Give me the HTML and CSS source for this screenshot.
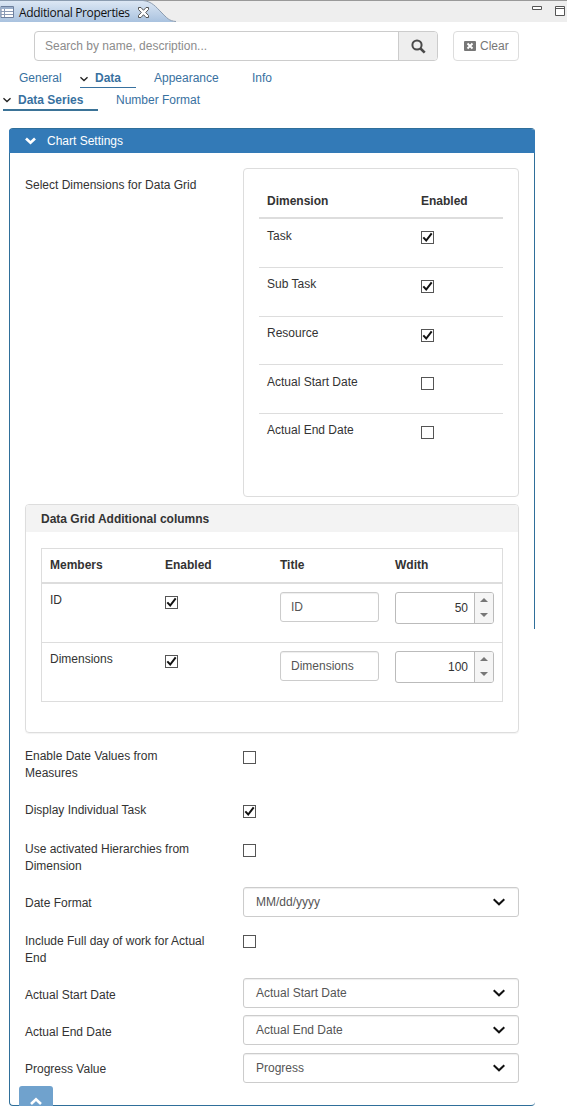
FILE: index.html
```html
<!DOCTYPE html>
<html lang="en">
<head>
<meta charset="utf-8">
<title>Additional Properties</title>
<link rel="stylesheet" href="styles.css">
</head>
<body>
<svg class="defs" width="0" height="0">
  <symbol id="chev" viewBox="0 0 12 8"><path d="M.7 1.300l5.300 5 5.300-5" fill="none" stroke="currentColor" stroke-width="2"/></symbol>
  <symbol id="tick" viewBox="0 0 11 11"><path d="M1.300 5.400l2.900 3.100L9.700 1.400" fill="none" stroke="#111" stroke-width="2"/></symbol>
</svg>
<header class="tabbar">
  <svg class="tabshape" width="180" height="22" viewBox="0 0 180 22">
    <defs><linearGradient id="g" x1="0" y1="0" x2="0" y2="1"><stop offset="0" stop-color="#dce7f4"/><stop offset="1" stop-color="#a9c2df"/></linearGradient></defs>
    <path d="M0 1H144C152 2 156 7 161 12C167 18 169 21 176 22H0Z" fill="url(#g)"/>
    <path d="M0 .5H143C152 1.500 156 7 161 12C167 18 169 21 176 21.500" fill="none" stroke="#8b9cb0"/>
  </svg>
  <div class="tab">
    <svg width="14" height="12" viewBox="0 0 14 12"><path d="M1 .5h12.500v11H1z" fill="#fff" stroke="#6d7f9d"/><path d="M1 1h12v2H1z" fill="#9cb0cc"/><path d="M1 5.500h12M1 8.500h12M4.500 3v8" stroke="#8a9ab5" fill="none"/></svg>
    <span class="tabtitle">Additional Properties</span>
    <svg width="11" height="11" viewBox="0 0 11 11"><path d="M.5.5h2.500l2.500 2.800L8 .5h2.500v2L7.700 5.500l2.800 3v2H8L5.500 7.700 3 10.500H.5v-2l2.800-3L.5 2.500z" fill="#fff" stroke="#555"/></svg>
  </div>
  <div class="winbtns">
    <svg width="10" height="4" viewBox="0 0 10 4"><path d="M.5.5h9v3h-9z" fill="#fff" stroke="#555"/></svg>
    <svg width="10" height="10" viewBox="0 0 10 10"><path d="M.5.5h9v9h-9zM.5 2.500h9" fill="#fff" stroke="#555"/></svg>
  </div>
</header>

<div class="searchrow">
  <div class="search"><span>Search by name, description...</span>
    <div class="go"><svg width="15" height="15" viewBox="0 0 15 15"><circle cx="6" cy="6" r="4.600" fill="none" stroke="#4a4a4a" stroke-width="2"/><path d="M9.500 9.500l4.200 4.200" stroke="#4a4a4a" stroke-width="2.600"/></svg></div>
  </div>
  <div class="clear"><svg width="12" height="10" viewBox="0 0 12 10"><rect width="12" height="10" rx="1" fill="#777"/><path d="M3.500 2.500l5 5M8.500 2.500l-5 5" stroke="#fff" stroke-width="1.900"/></svg>Clear</div>
</div>

<nav class="nav first">
  <span class="general">General</span>
  <span class="active data"><svg width="8" height="6"><use href="#chev"/></svg>Data</span>
  <span class="appearance">Appearance</span>
  <span>Info</span>
</nav>
<nav class="nav second">
  <span class="active series"><svg width="8" height="6"><use href="#chev"/></svg>Data Series</span>
  <span class="number">Number Format</span>
</nav>

<section class="panel">
  <div class="heading"><svg width="11" height="8" viewBox="0 0 11 8"><path d="M1 1.500l4.500 4.200L10 1.500" fill="none" stroke="#fff" stroke-width="2.700"/></svg>Chart Settings</div>
  <div class="body">
    <div class="dims">
      <div class="label">Select Dimensions for Data Grid</div>
      <div class="box">
        <div class="dhead"><b>Dimension</b><b>Enabled</b></div>
        <div class="drow low"><span>Task</span><i class="cb"><svg width="11" height="11"><use href="#tick"/></svg></i></div>
        <div class="drow"><span>Sub Task</span><i class="cb"><svg width="11" height="11"><use href="#tick"/></svg></i></div>
        <div class="drow"><span>Resource</span><i class="cb"><svg width="11" height="11"><use href="#tick"/></svg></i></div>
        <div class="drow low"><span>Actual Start Date</span><i class="cb"></i></div>
        <div class="drow"><span>Actual End Date</span><i class="cb"></i></div>
      </div>
    </div>

    <div class="sub">
      <div class="subhead">Data Grid Additional columns</div>
      <div class="grid">
        <div class="ghead"><b>Members</b><b>Enabled</b><b>Title</b><b>Wdith</b></div>
        <div class="grow"><span>ID</span><i class="cb"><svg width="11" height="11"><use href="#tick"/></svg></i><div class="input">ID</div>
          <div class="num"><span>50</span><div class="spin"><i class="up"></i><i class="down"></i></div></div></div>
        <div class="grow"><span>Dimensions</span><i class="cb"><svg width="11" height="11"><use href="#tick"/></svg></i><div class="input">Dimensions</div>
          <div class="num"><span>100</span><div class="spin"><i class="up"></i><i class="down"></i></div></div></div>
      </div>
    </div>

    <div class="form">
      <div class="frow r1"><div class="label">Enable Date Values from<br>Measures</div><i class="cb"></i></div>
      <div class="frow r2"><div class="label">Display Individual Task</div><i class="cb"><svg width="11" height="11"><use href="#tick"/></svg></i></div>
      <div class="frow r3"><div class="label">Use activated Hierarchies from<br>Dimension</div><i class="cb"></i></div>
      <div class="frow r4"><div class="label mid">Date Format</div><div class="select">MM/dd/yyyy<svg width="12" height="8"><use href="#chev"/></svg></div></div>
      <div class="frow r5"><div class="label">Include Full day of work for Actual<br>End</div><i class="cb"></i></div>
      <div class="frow r6"><div class="label mid">Actual Start Date</div><div class="select">Actual Start Date<svg width="12" height="8"><use href="#chev"/></svg></div></div>
      <div class="frow r7"><div class="label mid">Actual End Date</div><div class="select">Actual End Date<svg width="12" height="8"><use href="#chev"/></svg></div></div>
      <div class="frow r8"><div class="label mid">Progress Value</div><div class="select">Progress<svg width="12" height="8"><use href="#chev"/></svg></div></div>
    </div>
  </div>
</section>
<div class="totop"><svg width="12" height="8" viewBox="0 0 12 8"><path d="M1 7l5-4.800L11 7" fill="none" stroke="#fff" stroke-width="2.600"/></svg></div>
</body>
</html>
```

FILE: styles.css
```css
* { box-sizing: border-box; }
body { margin: 0; width: 567px; height: 1106px; overflow: hidden; position: relative; background: #fff; color: #333; font: 12px/17px "Liberation Sans", Arial, sans-serif; }
svg { display: block; flex: none; }
.defs { position: absolute; }

.tabbar { position: relative; height: 22px; background: #eee; border-top: 1px solid #999; display: flex; justify-content: space-between; }
.tabshape { position: absolute; left: 0; top: -1px; }
.tab { position: relative; display: flex; align-items: center; height: 22px; color: #111; }
.tabtitle { margin: 0 7px 0 5px; width: 112px; font: 12px/17px "Open Sans", sans-serif; letter-spacing: -0.35px; white-space: nowrap; }
.winbtns { display: flex; gap: 13px; padding: 5px 2px 0 0; }

.searchrow { display: flex; gap: 15px; padding: 9px 0 0 34px; }
.search { width: 404px; height: 30px; border: 1px solid #ccc; border-radius: 4px; display: flex; justify-content: space-between; line-height: 28px; color: #8c8c8c; padding-left: 10px; overflow: hidden; }
.go { width: 39px; background: #eee; border-left: 1px solid #ccc; display: flex; align-items: center; justify-content: center; }
.clear { width: 66px; height: 30px; border: 1px solid #ddd; border-radius: 4px; display: flex; align-items: center; gap: 4px; padding-left: 10px; color: #777; }

.nav { display: flex; color: #38719f; white-space: nowrap; }
.nav .active { display: flex; align-items: center; font-weight: bold; }
.nav .active svg { color: #222; }
.first { height: 23px; padding: 9px 0 0 19px; }
.general { width: 61px; }
.data { width: 56px; height: 18px; gap: 7px; border-bottom: 1px solid #38719f; margin-right: 18px; }
.appearance { width: 98px; }
.second { height: 27px; padding: 7px 0 0 3px; }
.series { width: 95px; height: 20px; gap: 7px; border-bottom: 2px solid #3b7397; margin-right: 18px; }
.number { padding-top: 1px; }

.panel { width: 526px; height: 978px; margin: 17px 0 0 9px; border: 1px solid #2f6f9a; border-right: 0; border-radius: 4px; background: linear-gradient(#2f6f9a, #2f6f9a) right top / 1px 500px no-repeat; }
.heading { height: 24px; margin-left: -1px; background: #337ab7; border-radius: 3px 4px 0 0; color: #fff; display: flex; align-items: center; gap: 11px; padding: 0 0 0 16px; }
.body { padding: 15px 16px 0 15px; }
.label { width: 218px; flex: none; }
.dims { display: flex; height: 329px; }
.dims .label { padding-top: 9px; }
.box { width: 276px; height: 329px; border: 1px solid #ddd; border-radius: 4px; padding: 15px; }
.dhead, .drow { display: grid; grid-template-columns: 154px 1fr; padding: 8px 8px 0; }
.dhead { height: 35px; padding-top: 9px; border-bottom: 2px solid #ddd; }
.drow { height: 48.75px; border-bottom: 1px solid #ddd; }
.drow:last-child { border: 0; }
.low span { padding-top: 1px; }
.cb { width: 13px; height: 13px; border: 1px solid #555; background: #fff; }
.drow .cb, .grow .cb { margin-top: 4px; }

.sub { margin-top: 7px; height: 229px; border: 1px solid #ddd; border-radius: 4px; box-shadow: 0 1px 1px rgba(0,0,0,.05); }
.subhead { height: 27px; background: #f3f3f3; font-weight: bold; padding: 6px 15px 4px; border-radius: 3px 3px 0 0; }
.grid { margin: 16px 15px 0; border: 1px solid #ddd; height: 154px; }
.ghead, .grow { display: grid; grid-template-columns: repeat(4, 115px); padding: 8px 0 0 8px; }
.ghead { height: 35px; border-bottom: 2px solid #ddd; }
.grow { height: 59px; align-items: start; border-bottom: 1px solid #ddd; }
.grow:last-child { border: 0; }
.input { width: 99px; height: 30px; border: 1px solid #ccc; border-radius: 3px; line-height: 28px; padding-left: 10px; color: #555; box-shadow: inset 0 1px 1px rgba(0,0,0,.07); }
.num { width: 99px; height: 32px; border: 1px solid #bbb; border-radius: 3px; display: flex; justify-content: flex-end; line-height: 31px; overflow: hidden; }
.spin { width: 19px; margin-left: 6px; background: #f5f5f5; border-left: 1px solid #bbb; display: flex; flex-direction: column; align-items: center; justify-content: center; gap: 11px; padding-bottom: 1px; }
.up, .down { border: 4px solid transparent; height: 0; }
.up { border-top: 0; border-bottom-color: #777; }
.down { border-bottom: 0; border-top-color: #777; }

.form { padding-top: 15px; }
.frow { display: flex; }
.frow .cb { margin-top: 3px; }
.r1 { height: 54px; }
.r2 { height: 39px; }
.r3, .r4 { height: 46px; }
.r5 { height: 45px; }
.r5 .cb { margin-top: 2px; }
.r6 { height: 37px; }
.r7 { height: 38px; }
.mid { padding-top: 8px; }
.r6 .mid, .r7 .mid { padding-top: 9px; }
.select { width: 276px; height: 30px; border: 1px solid #ccc; border-radius: 3px; padding: 0 13px 0 12px; display: flex; justify-content: space-between; align-items: center; color: #555; box-shadow: inset 0 1px 1px rgba(0,0,0,.07); }
.select svg { color: #111; }
.totop { position: absolute; left: 19px; top: 1086px; width: 34px; height: 34px; border-radius: 3px; background: #70a2cd; display: flex; justify-content: center; padding-top: 11px; }
```
